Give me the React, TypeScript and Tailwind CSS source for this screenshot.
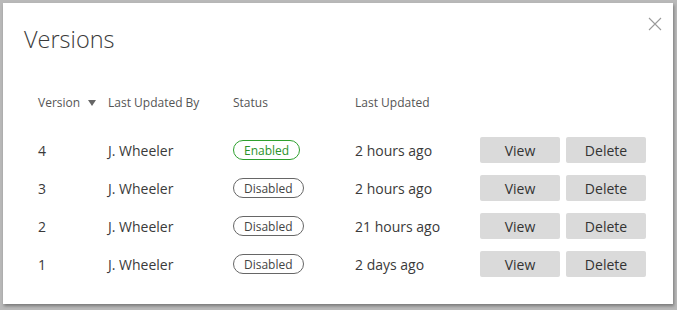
import React from "react";

const rows = [
  { v: "4", by: "J. Wheeler", enabled: true, when: "2 hours ago" },
  { v: "3", by: "J. Wheeler", enabled: false, when: "2 hours ago" },
  { v: "2", by: "J. Wheeler", enabled: false, when: "21 hours ago" },
  { v: "1", by: "J. Wheeler", enabled: false, when: "2 days ago" },
];

export default function App() {
  return (
    <div
      className="w-[677px] h-[310px] bg-[#b9b9b9] p-[3px] pb-[6px] pr-[4px]"
      style={{ fontFamily: '"Open Sans", "Noto Sans", sans-serif' }}
    >
      <div className="relative h-full w-full bg-white shadow-[1px_2px_3px_rgba(0,0,0,0.35)]">
        <svg
          className="absolute left-[645px] top-[14px]"
          width="14"
          height="14"
          viewBox="0 0 14 14"
        >
          <path d="M1 1L13 13M13 1L1 13" stroke="#9a9a9a" strokeWidth="1.1" />
        </svg>
        <div className="pl-[21px] pt-[21px] text-[23.5px] font-light leading-[30px] text-[#3a3a3a]">
          Versions
        </div>
        <div className="pl-[35px] pt-[37px]">
          <div className="grid grid-cols-[70px_125px_122px_125px_166px] items-center h-[24px] text-[12px] text-[#555]">
            <div className="flex items-center gap-[8px]">
              <span>Version</span>
              <svg width="8" height="6" viewBox="0 0 8 6">
                <path d="M0 0H8L4 6Z" fill="#666" />
              </svg>
            </div>
            <div>Last Updated By</div>
            <div>Status</div>
            <div>Last Updated</div>
            <div />
          </div>
          <div className="mt-[22px] flex flex-col gap-[12px]">
            {rows.map((r) => (
              <div
                key={r.v}
                className="grid grid-cols-[70px_125px_122px_125px_80px_6px_80px] items-center h-[26px] text-[14px] text-[#3a3a3a]"
              >
                <div>{r.v}</div>
                <div>{r.by}</div>
                <div className="flex">
                  {r.enabled ? (
                    <span className="inline-flex h-[20px] items-center rounded-full border border-[#2ea02e] px-[10px] pt-[1px] text-[12px] leading-none text-[#2a922a]">
                      Enabled
                    </span>
                  ) : (
                    <span className="inline-flex h-[20px] items-center rounded-full border border-[#666] px-[10px] pt-[1px] text-[12px] leading-none text-[#444]">
                      Disabled
                    </span>
                  )}
                </div>
                <div>{r.when}</div>
                <button className="h-[26px] w-[80px] rounded-[2px] bg-[#dadada] text-[14px] text-[#333]">
                  View
                </button>
                <div />
                <button className="h-[26px] w-[80px] rounded-[2px] bg-[#dadada] text-[14px] text-[#333]">
                  Delete
                </button>
              </div>
            ))}
          </div>
        </div>
      </div>
    </div>
  );
}
